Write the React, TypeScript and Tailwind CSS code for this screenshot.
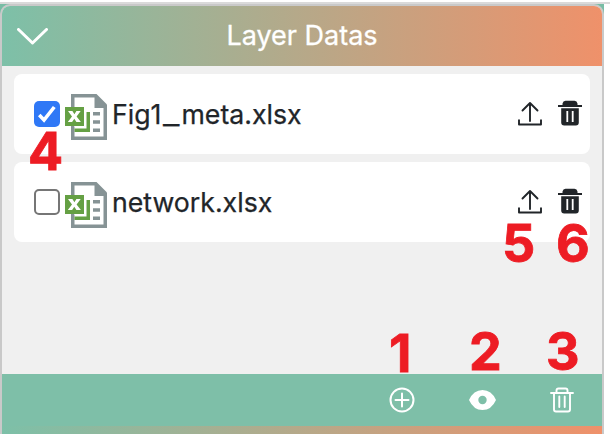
import React from "react";

function SheetIcon() {
  return (
    <svg width="42" height="46" viewBox="0 0 42 46" className="shrink-0">
      <path d="M6 0h25.500l10.500 10.500V46H6z" fill="#869395" />
      <path d="M9.500 3.500h20V14h9v28.500h-29z" fill="#fff" />
      <path d="M28 18h7v3.500h-7zM28 26.300h7v3.500h-7zM28 34.500h7V38h-7z" fill="#869395" />
      <path d="M21.500 18h3.500v20H9.500v-3.500h12z" fill="#65a044" />
      <path d="M0 13h19v19H0z" fill="#65a044" />
      <path d="M19 13h1v20H9.500v-1H19z" fill="#fff" />
      <path d="M3 17h4.400l2 3.200 2-3.200h4.300l-4.100 5.400 4.300 5.600h-4.500l-2.100-3.300-2.200 3.300H2.800l4.200-5.600z" fill="#fff" />
    </svg>
  );
}

function UploadIcon() {
  return (
    <svg width="24" height="26" viewBox="0 0 24 26" fill="none" stroke="#212529" strokeWidth="1.900" strokeLinecap="round" strokeLinejoin="round">
      <path d="M12 20V2M4.500 9.500 12 2l7.500 7.500" />
      <path d="M1 18.500V23.500h22v-5" strokeLinecap="butt" />
    </svg>
  );
}

function SolidTrashIcon() {
  return (
    <svg width="26" height="26" viewBox="0 0 26 26" fill="#212529">
      <path d="M1 5h4.500V3.500Q6 1 8.500 0.800h9Q20 1 20.500 3.500V5H25v2H1z" />
      <path fillRule="evenodd" d="M4.200 8.200h17.600V22.500q0 3-3 3H7.200q-3 0-3-3zM9.400 11v11h1.800V11zm5.400 0v11h1.800V11z" />
    </svg>
  );
}

function FileRow({ name, checked }: { name: string; checked: boolean }) {
  const parts = name.split("_");
  return (
    <div className="flex h-20 items-center rounded-lg bg-white pr-[7px] pl-5">
      {checked ? (
        <span className="flex size-[26px] shrink-0 items-center justify-center rounded-[5px] bg-[#2f78f6]">
          <svg width="18" height="18" viewBox="0 0 18 18" fill="none" stroke="#fff" strokeWidth="3.600">
            <path d="m1.200 10 4.800 5L16.300 2" />
          </svg>
        </span>
      ) : (
        <span className="size-[26px] shrink-0 rounded-[5px] border-2 border-[#767676] bg-white" />
      )}
      <span className="mt-[5px] ml-[5px] shrink-0"><SheetIcon /></span>
      <span className="ml-[5px] flex-1 text-[26.700px] leading-8 whitespace-nowrap text-[#212529] [-webkit-text-stroke:0.25px_#212529]">
        {parts[0]}
        {parts.length > 1 && <span className="ml-[2px] inline-block w-[18px] origin-left scale-x-[1.35]">_</span>}
        {parts[1]}
      </span>
      <span className="mr-[15px] -mt-px"><UploadIcon /></span>
      <span className="-mt-0.5"><SolidTrashIcon /></span>
    </div>
  );
}

const marks = [
  { n: "1", pos: "left-[389px] top-[322px]" },
  { n: "2", pos: "left-[469px] top-[320px]" },
  { n: "3", pos: "left-[546px] top-[320px]" },
  { n: "4", pos: "left-[28px] top-[120px]" },
  { n: "5", pos: "left-[502px] top-[212px]" },
  { n: "6", pos: "left-[556px] top-[212px]" },
];

export default function App() {
  return (
    <div className="relative h-[434px] w-[610px] overflow-hidden bg-white pt-0.5 font-['Inter','Liberation_Sans',sans-serif]">
      <div className="h-0.5 bg-[#dadada]" />
      <div className="w-[604px] bg-[#78bda5]">
        <div className="h-[430px] overflow-hidden rounded-t-[10px] border-x-2 border-t-2 border-[#c9c9c9] bg-[#f0f0f0]">
          <header className="flex h-[60px] items-center bg-[linear-gradient(90deg,#7dc0a8,#ef916a)] pl-[15px] text-white">
            <svg width="31" height="17" viewBox="0 0 31 17" fill="none" stroke="#fff" strokeWidth="3" strokeLinecap="round" strokeLinejoin="round">
              <path d="M1.500 1.500 15.500 15 29.500 1.500" />
            </svg>
            <h1 className="flex-1 pr-[46px] text-center text-[27px] leading-8 font-normal [-webkit-text-stroke:0.3px_white]">Layer Datas</h1>
          </header>
          <main className="flex h-[308px] flex-col gap-2 px-3 pt-2">
            <FileRow name="Fig1_meta.xlsx" checked />
            <FileRow name="network.xlsx" checked={false} />
          </main>
          <footer className="flex h-[52px] items-center justify-end bg-[#7ebfa8] pr-[27px] pb-px">
            <svg width="26" height="26" viewBox="0 0 26 26" fill="none" stroke="#fff" strokeWidth="2" strokeLinecap="round">
              <circle cx="13" cy="13" r="11.500" />
              <path d="M13 6.500v13M6.500 13h13" />
            </svg>
            <svg className="ml-[54px]" width="27" height="20" viewBox="0 0 27 20" fill="#fff">
              <path fillRule="evenodd" d="M0 10Q4.500 0 13.500 0T27 10Q22.500 20 13.500 20T0 10zm9.300 0a4.200 4.200 0 1 0 8.400 0 4.200 4.200 0 0 0-8.400 0z" />
            </svg>
            <svg className="ml-[53px]" width="26" height="26" viewBox="0 0 26 26" fill="none" stroke="#fff" strokeWidth="1.900" strokeLinecap="round" strokeLinejoin="round">
              <path d="M2 6h22M7.500 6V3.500q0-2 2-2h7q2 0 2 2V6M5 6v16.500q0 2 2 2h12q2 0 2-2V6M10.300 9.500v10.500M15.700 9.500v10.500" />
            </svg>
          </footer>
          <div className="h-2 bg-[linear-gradient(90deg,#7dc0a8,#ef916a)]" />
        </div>
      </div>
      {marks.map((m) => (
        <span key={m.n} className={`absolute text-[52px] leading-[64px] font-bold text-[#ed1c24] [-webkit-text-stroke:0.8px_#ed1c24] ${m.pos}`}>{m.n}</span>
      ))}
    </div>
  );
}
